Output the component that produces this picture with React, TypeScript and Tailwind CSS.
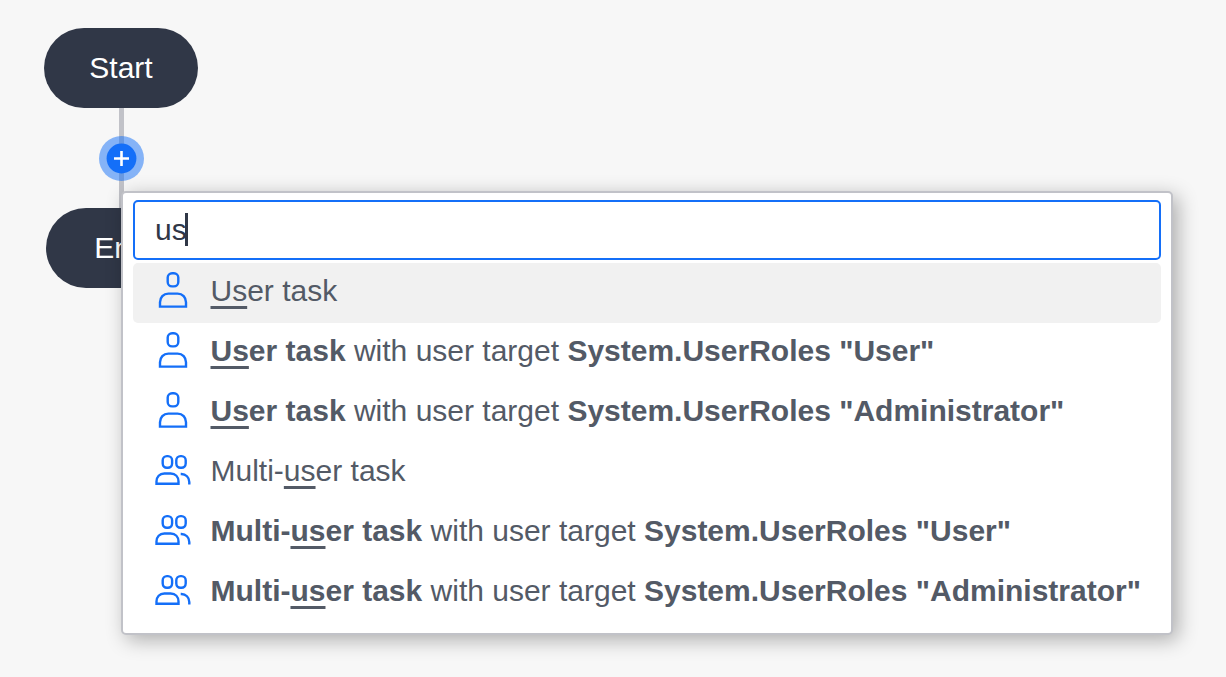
import React from "react";

type Part = { text: string; bold?: boolean; match?: boolean };
type Option = { icon: "user" | "users"; parts: Part[] };

const target = (role: string): Part[] => [
  { text: " with user target " },
  { text: `System.UserRoles "${role}"`, bold: true },
];

const single = (bold: boolean): Part[] => [
  { text: "Us", bold, match: true },
  { text: "er task", bold },
];

const multi = (bold: boolean): Part[] => [
  { text: "Multi-", bold },
  { text: "us", bold, match: true },
  { text: "er task", bold },
];

const options: Option[] = [
  { icon: "user", parts: single(false) },
  { icon: "user", parts: [...single(true), ...target("User")] },
  { icon: "user", parts: [...single(true), ...target("Administrator")] },
  { icon: "users", parts: multi(false) },
  { icon: "users", parts: [...multi(true), ...target("User")] },
  { icon: "users", parts: [...multi(true), ...target("Administrator")] },
];

function UserIcon() {
  return (
    <svg className="h-[60px] w-9 shrink-0" viewBox="0 0 36 60" fill="none" stroke="#146ff8" strokeWidth="2.4">
      <rect x="12.7" y="10.2" width="10.6" height="13.2" rx="4.4" />
      <path d="M5 43.6v-4.3c0-5 3.4-8.7 8.4-8.7h9.2c5 0 8.4 3.7 8.4 8.7v4.3z" />
    </svg>
  );
}

function UsersIcon() {
  return (
    <svg className="h-[60px] w-9 shrink-0" viewBox="0 0 36 60" fill="none" stroke="#146ff8" strokeWidth="2.4">
      <rect x="7.7" y="13.1" width="9.4" height="11.7" rx="4.2" />
      <rect x="21.3" y="13.1" width="9.4" height="11.7" rx="4.2" />
      <path d="M1.5 40.8v-2.2c0-4.7 3.1-8.1 7.8-8.1h6.4c4.7 0 7.8 3.4 7.8 8.1v2.2z" />
      <path d="M25.7 31h.7c4.3 0 7.9 3.4 7.9 7.9v2.5" />
    </svg>
  );
}

function Node({ label, className }: { label: string; className: string }) {
  return (
    <div className={`absolute flex h-20 items-center justify-center rounded-full bg-[#303747] text-white ${className}`}>
      {label}
    </div>
  );
}

export default function App() {
  return (
    <div className="relative h-[677px] w-[1226px] overflow-hidden bg-[#f7f7f7] font-['Liberation_Sans',Arial,sans-serif] text-[30px] leading-[60px]">
      <div className="absolute top-[100px] left-[119px] h-[120px] w-[5px] bg-[#c1c2c8]" />
      <Node label="Start" className="top-7 left-11 w-[154px]" />
      <Node label="End" className="top-[208px] left-[46px] w-[150px]" />
      <svg className="absolute top-[136px] left-[99px] size-[45px]" viewBox="0 0 45 45">
        <circle cx="22.5" cy="22.5" r="22.5" fill="#146ff8" fillOpacity="0.5" />
        <circle cx="22.5" cy="22.5" r="14.9" fill="#146ff8" />
        <path d="M15 22.5h15M22.5 15v15" stroke="#fff" strokeWidth="2.6" />
      </svg>

      <div className="absolute top-[191px] left-[121px] flex h-[444px] w-[1052px] flex-col rounded-[5px] border-2 border-[#c1c2c8] bg-white px-2.5 pt-[7px] shadow-[5px_5px_20px_rgba(0,0,0,0.3)]">
        <div className="mb-[3px] flex h-[60px] w-[1028px] shrink-0 items-center rounded-[5px] border-2 border-[#146ff8] pl-5 text-[#303747]">
          <span>us</span>
          <span className="mb-0.5 -ml-0.5 h-[33px] w-[3px] bg-[#303747]" />
        </div>
        {options.map((option, i) => (
          <div
            key={i}
            className={`flex h-[60px] w-[1028px] shrink-0 gap-[19.5px] rounded-[5px] pl-[22px] text-[#535a66] ${i === 0 ? "bg-[#f1f1f1]" : ""}`}
          >
            {option.icon === "user" ? <UserIcon /> : <UsersIcon />}
            <div className="-mt-0.5 whitespace-pre">
              {option.parts.map((part, j) => (
                <span
                  key={j}
                  className={`${part.bold ? "font-bold" : ""} ${part.match ? "underline decoration-[3px] underline-offset-[5px] [text-decoration-skip-ink:none]" : ""}`}
                >
                  {part.text}
                </span>
              ))}
            </div>
          </div>
        ))}
      </div>
    </div>
  );
}
